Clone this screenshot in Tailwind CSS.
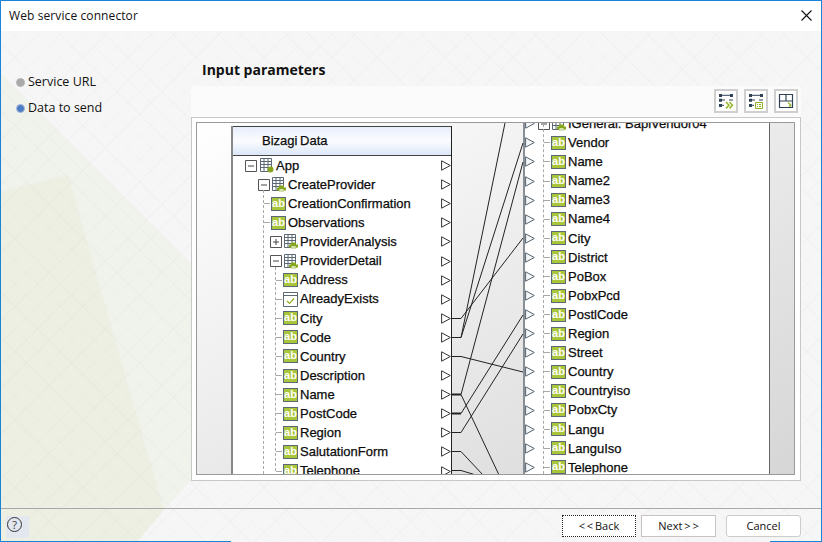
<!DOCTYPE html>
<html lang="en">
<head>
  <meta charset="UTF-8">
  <title>Web service connector</title>
  <script src="https://cdn.jsdelivr.net/npm/@tailwindcss/browser@4"></script>
</head>
<body class="bg-white font-['Open_Sans',sans-serif] text-[#111]">
<div class="relative w-[822px] h-[542px] overflow-hidden flex flex-col border-x border-t border-[#1883d7] bg-[#f6f6f6]">

  <!-- background shapes -->
  <svg class="absolute left-[-1px] top-[-1px]" width="822" height="542">
    <polygon points="0,72 191,263 191,480 164,510 137,542 0,542" fill="#f0f2ec"/>
    <polygon points="0,192 68,175 164,510 137,542 0,542" fill="#edefe3"/>
  </svg>
  <div class="absolute inset-0 bg-[repeating-linear-gradient(45deg,rgba(0,0,0,0.014)_0,rgba(0,0,0,0.014)_1px,transparent_1px,transparent_16px),repeating-linear-gradient(-45deg,rgba(0,0,0,0.014)_0,rgba(0,0,0,0.014)_1px,transparent_1px,transparent_16px)]"></div>

  <!-- title bar -->
  <div class="relative h-[30px] shrink-0 bg-white flex items-center justify-between pl-2 pr-[9px]">
    <span class="text-[12px] tracking-[0.1px]">Web service connector</span>
    <svg width="11" height="11" viewBox="0 0 11 11" class="mb-[1px]"><path d="M.5.5l10 10M10.5.5l-10 10" stroke="#111" stroke-width="1.1" fill="none"/></svg>
  </div>

  <div class="relative flex-1 flex min-h-0">
    <!-- steps -->
    <div class="w-[190px] shrink-0 pt-[41px] pl-[15px] text-[12.5px]">
      <div class="flex items-center h-[20px] gap-[3px]">
        <span class="w-[9px] h-[9px] rounded-full border border-[#b5b5b5] bg-[#a9a9a9]"></span>
        <span>Service URL</span>
      </div>
      <div class="flex items-center h-[20px] gap-[3px] mt-[6px]">
        <span class="w-[9px] h-[9px] rounded-full border border-[#a9bcd8] bg-[#4d7cc4]"></span>
        <span>Data to send</span>
      </div>
    </div>

    <div class="w-[610px] shrink-0">
      <h2 class="h-[55px] pt-[29px] pl-[11px] text-[14px] leading-[20px] font-bold">Input parameters</h2>
      <!-- toolbar -->
      <div class="h-[31px] bg-[#fbfbfb] rounded-t-[4px] flex justify-end gap-[6px] pt-[3px] pr-[3px]">
        <button class="w-[24px] h-[24px] border-2 border-[#cfcfcf] bg-white">
          <svg width="24" height="24" viewBox="0 0 24 24" class="block -m-[2px]">
            <path d="M5 6.3h14M5 11h6M5 16.3h5M15 11h4" stroke="#2f4256" stroke-width="1" fill="none"/>
            <path d="M5 5h3v3H5zM16 5h3v3h-3zM5 9.7h3v3H5zM5 15h3v3H5z" fill="#2f4256"/>
            <path d="M12 13l3 3.2-3 3.2M15.5 13l3 3.2-3 3.2" stroke="#9cb82e" stroke-width="1.6" fill="none"/>
          </svg>
        </button>
        <button class="w-[24px] h-[24px] border-2 border-[#cfcfcf] bg-white">
          <svg width="24" height="24" viewBox="0 0 24 24" class="block -m-[2px]">
            <path d="M5 6.3h14M5 11h6M5 16.3h5M15 11h4" stroke="#2f4256" stroke-width="1" fill="none"/>
            <path d="M5 5h3v3H5zM16 5h3v3h-3zM5 9.7h3v3H5zM5 15h3v3H5z" fill="#2f4256"/>
            <path d="M11.5 13.5h7v6h-7z" stroke="#8fae1f" stroke-width="1" fill="#fff"/>
            <path d="M13 15.5h1M15 15.5h2M13 17.5h1M15 17.5h2" stroke="#8fae1f" stroke-width="1"/>
          </svg>
        </button>
        <button class="w-[24px] h-[24px] border-2 border-[#cfcfcf] bg-white">
          <svg width="24" height="24" viewBox="0 0 24 24" class="block -m-[2px]">
            <path d="M5.5 5.5h13v13h-13zM12 5.5V12M5.5 12H18.500" stroke="#2f4256" stroke-width="1.2" fill="none"/>
            <path d="M14 13.500l2 2" stroke="#9cb82e" stroke-width="1.2"/>
            <path d="M14.500 18l3-.7-.7-3z" fill="#8fae1f"/>
          </svg>
        </button>
      </div>

      <!-- mapping frame -->
      <div class="h-[364px] border border-[#c8c8c8] bg-white pt-[4px] px-[4px]">
        <div class="relative h-[353px] w-[599px] border border-[#999999] overflow-hidden flex bg-linear-to-br from-white to-[#d6d6d6]">
          <div class="w-[34px] shrink-0"></div>

          <div class="relative w-[221px] shrink-0 mt-[3px] bg-white border-l-2 border-l-[#888888] border-r border-r-[#222] font-['Liberation_Sans',sans-serif] text-[13px]">
            <div class="h-[30px] border-y border-[#444] bg-linear-to-b from-[#e6eefb] via-[#fbfcff] to-[#dbe7f9] flex items-center pl-[29px] [word-spacing:-1px] [-webkit-text-stroke:0.25px_#000]">Bizagi Data</div>
            <span class="absolute left-[30px] top-[64px] bottom-0 border-l border-dashed border-[#a8a8a8]"></span>
            <span class="absolute left-[42px] top-[141px] h-[204px] border-l border-dashed border-[#a8a8a8]"></span>
            <div id="left-rows"></div>
          </div>

          <div class="w-[71px] shrink-0"></div>

          <div class="relative w-[247px] shrink-0 -mt-[8.8px] bg-white border-l-2 border-l-[#8a8f96] border-r border-r-[#666] font-['Liberation_Sans',sans-serif] text-[13px]">
            <span class="absolute left-[18px] top-0 bottom-0 border-l border-dashed border-[#a8a8a8]"></span>
            <div id="right-rows"></div>
          </div>

          <div class="flex-1"></div>

          <!-- links between the two trees -->
          <svg class="absolute left-0 top-0" width="597" height="351">
            <g transform="translate(-197 -123)" fill="none" stroke="#222" stroke-width="1">
              <path d="M452 318.5h9L523 238"/>
              <path d="M452 337.5h9L505 123"/>
              <path d="M461 337.5L523 143"/>
              <path d="M461 394.5L523 162"/>
              <path d="M461 394.5L499 475"/>
              <path d="M461 413.5L523 315"/>
              <path d="M452 432.5h9L523 334"/>
              <path d="M452 356.5h9L523 372"/>
              <path d="M452 451.5h9L483 475"/>
              <path d="M452 470.5h9L476 475"/>
              <path d="M452 394.5h9M452 413.5h9" stroke-width="2"/>
            </g>
          </svg>
        </div>
      </div>
    </div>
  </div>

  <!-- footer -->
  <div class="relative h-[34px] shrink-0 border-t border-[#a9a9a9] flex items-start justify-between pr-[20px] pt-[6px] text-[11px]">
    <div class="ml-[5px] mt-[1px] w-[23px] h-[22px] bg-[#e3e7f0] flex pl-[1px] pt-[1px]">
      <span class="w-[15px] h-[15px] rounded-full border border-[#333] flex items-center justify-center text-[11px] leading-none text-[#333]">?</span>
    </div>
    <div class="flex">
      <button class="w-[74px] h-[22px] bg-white border border-dotted border-[#222] [word-spacing:-1px]">&lt; &lt; Back</button>
      <button class="w-[75px] h-[22px] ml-[5px] bg-white border border-[#c9c2c4] [word-spacing:-1px]">Next &gt; &gt;</button>
      <button class="w-[75px] h-[22px] ml-[10px] bg-white border border-[#cccccc] rounded-[3px]">Cancel</button>
    </div>
  </div>
  <span class="absolute left-[-1px] bottom-0 w-[231px] h-px bg-[#1883d7]"></span>
  <span class="absolute right-[-1px] bottom-0 w-[52px] h-px bg-[#1883d7]"></span>
</div>

<script>
const abIcon = `<span class="w-[15px] h-[14px] shrink-0 border border-[#5b6875] bg-[#a9c53a] text-white text-[11px] leading-[11px] font-bold text-center font-['Liberation_Sans',sans-serif]">ab</span>`;
const checkIcon = `<svg class="shrink-0" width="15" height="15" viewBox="0 0 15 15"><path d="M.5.5h14v14H.5z" fill="#fff" stroke="#5b6875"/><path d="M.5 3.5h14" stroke="#5b6875"/><path d="M4 9l2.5 2.5L11 6.5" stroke="#8fae1f" stroke-width="1.2" fill="none"/></svg>`;
const tableIcon = (badge) => `<svg class="shrink-0" width="14" height="15" viewBox="0 0 14 15"><path d="M.5.5h11v13H.5zM.5 3.5h11M.5 6.500h11M.5 9.500h11M4 .5v13M8 .5v13" fill="#fff" stroke="#5b6875"/>${badge}</svg>`;
const printerBadge = `<path d="M7 8.5h5v2h2v3H5v-3h2z" fill="#86a61e"/><path d="M7 12h5v2H7z" fill="#fff" stroke="#86a61e" stroke-width=".7"/>`;
const dotBadge = `<circle cx="10.500" cy="11.500" r="3" fill="#86a61e"/>`;
const expander = (open) => `<svg class="shrink-0" width="12" height="12" viewBox="0 0 12 12"><path d="M.5.5h11v11H.5z" fill="#fff" stroke="#555"/><path d="M3 6h6${open ? '' : 'M6 3v6'}" stroke="#444"/></svg>`;
const inTriangle = `<svg class="block shrink-0" width="10" height="11" viewBox="0 0 10 11"><path d="M.6.8L9.3 5.5.6 10.200z" fill="#fff" stroke="#333"/></svg>`;
const outTriangle = `<svg class="block shrink-0" width="10" height="11" viewBox="0 0 10 11"><path d="M.6.8L9.3 5.5.6 10.200z" fill="#f4f6f8" stroke="#56646f"/></svg>`;
const dash = `<span class="w-[6px] h-0 shrink-0 border-t border-dashed border-[#a8a8a8]"></span>`;

const ink = "[-webkit-text-stroke:0.25px_#000]";

const folder = (pl, gap, badge, open, label) =>
  `<div class="flex items-center h-[19.1px] ${pl}">${expander(open)}<span class="${gap} shrink-0"></span>${tableIcon(badge)}<span class="ml-[2px] ${ink}">${label}</span><span class="ml-auto">${inTriangle}</span></div>`;
const leaf = (pl, icon, label) =>
  `<div class="flex items-center h-[19.1px] ${pl}">${dash}<span class="w-px shrink-0"></span>${icon}<span class="ml-[2px] ${ink}">${label}</span><span class="ml-auto">${inTriangle}</span></div>`;

const leftNames = ['Address', 'AlreadyExists', 'City', 'Code', 'Country', 'Description', 'Name', 'PostCode', 'Region', 'SalutationForm', 'Telephone'];
document.getElementById('left-rows').innerHTML = [
  folder('pl-[12px]', 'w-[3px]', dotBadge, true, 'App'),
  folder('pl-[25px]', 'w-[2px]', printerBadge, true, 'CreateProvider'),
  leaf('pl-[31px]', abIcon, 'CreationConfirmation'),
  leaf('pl-[31px]', abIcon, 'Observations'),
  folder('pl-[37px]', 'w-[2px]', printerBadge, false, 'ProviderAnalysis'),
  folder('pl-[37px]', 'w-[2px]', printerBadge, true, 'ProviderDetail'),
  ...leftNames.map(n => leaf('pl-[43px]', n === 'AlreadyExists' ? checkIcon : abIcon, n))
].join('');

const rightNames = ['Vendor', 'Name', 'Name2', 'Name3', 'Name4', 'City', 'District', 'PoBox', 'PobxPcd', 'PostlCode', 'Region', 'Street', 'Country', 'Countryiso', 'PobxCty', 'Langu', 'LanguIso', 'Telephone'];
document.getElementById('right-rows').innerHTML =
  `<div class="flex items-center h-[19.1px]">${outTriangle}<span class="ml-[3px]"></span>${expander(true)}<span class="w-[2px]"></span>${tableIcon(printerBadge)}<span class="ml-[2px] ${ink}">IGeneral: BapiVendor04</span></div>` +
  rightNames.map(n =>
    `<div class="flex items-center h-[19.1px]">${outTriangle}<span class="ml-[9px]"></span>${dash}<span class="w-px shrink-0"></span>${abIcon}<span class="ml-[2px] ${ink}">${n}</span></div>`
  ).join('');
</script>
</body>
</html>
